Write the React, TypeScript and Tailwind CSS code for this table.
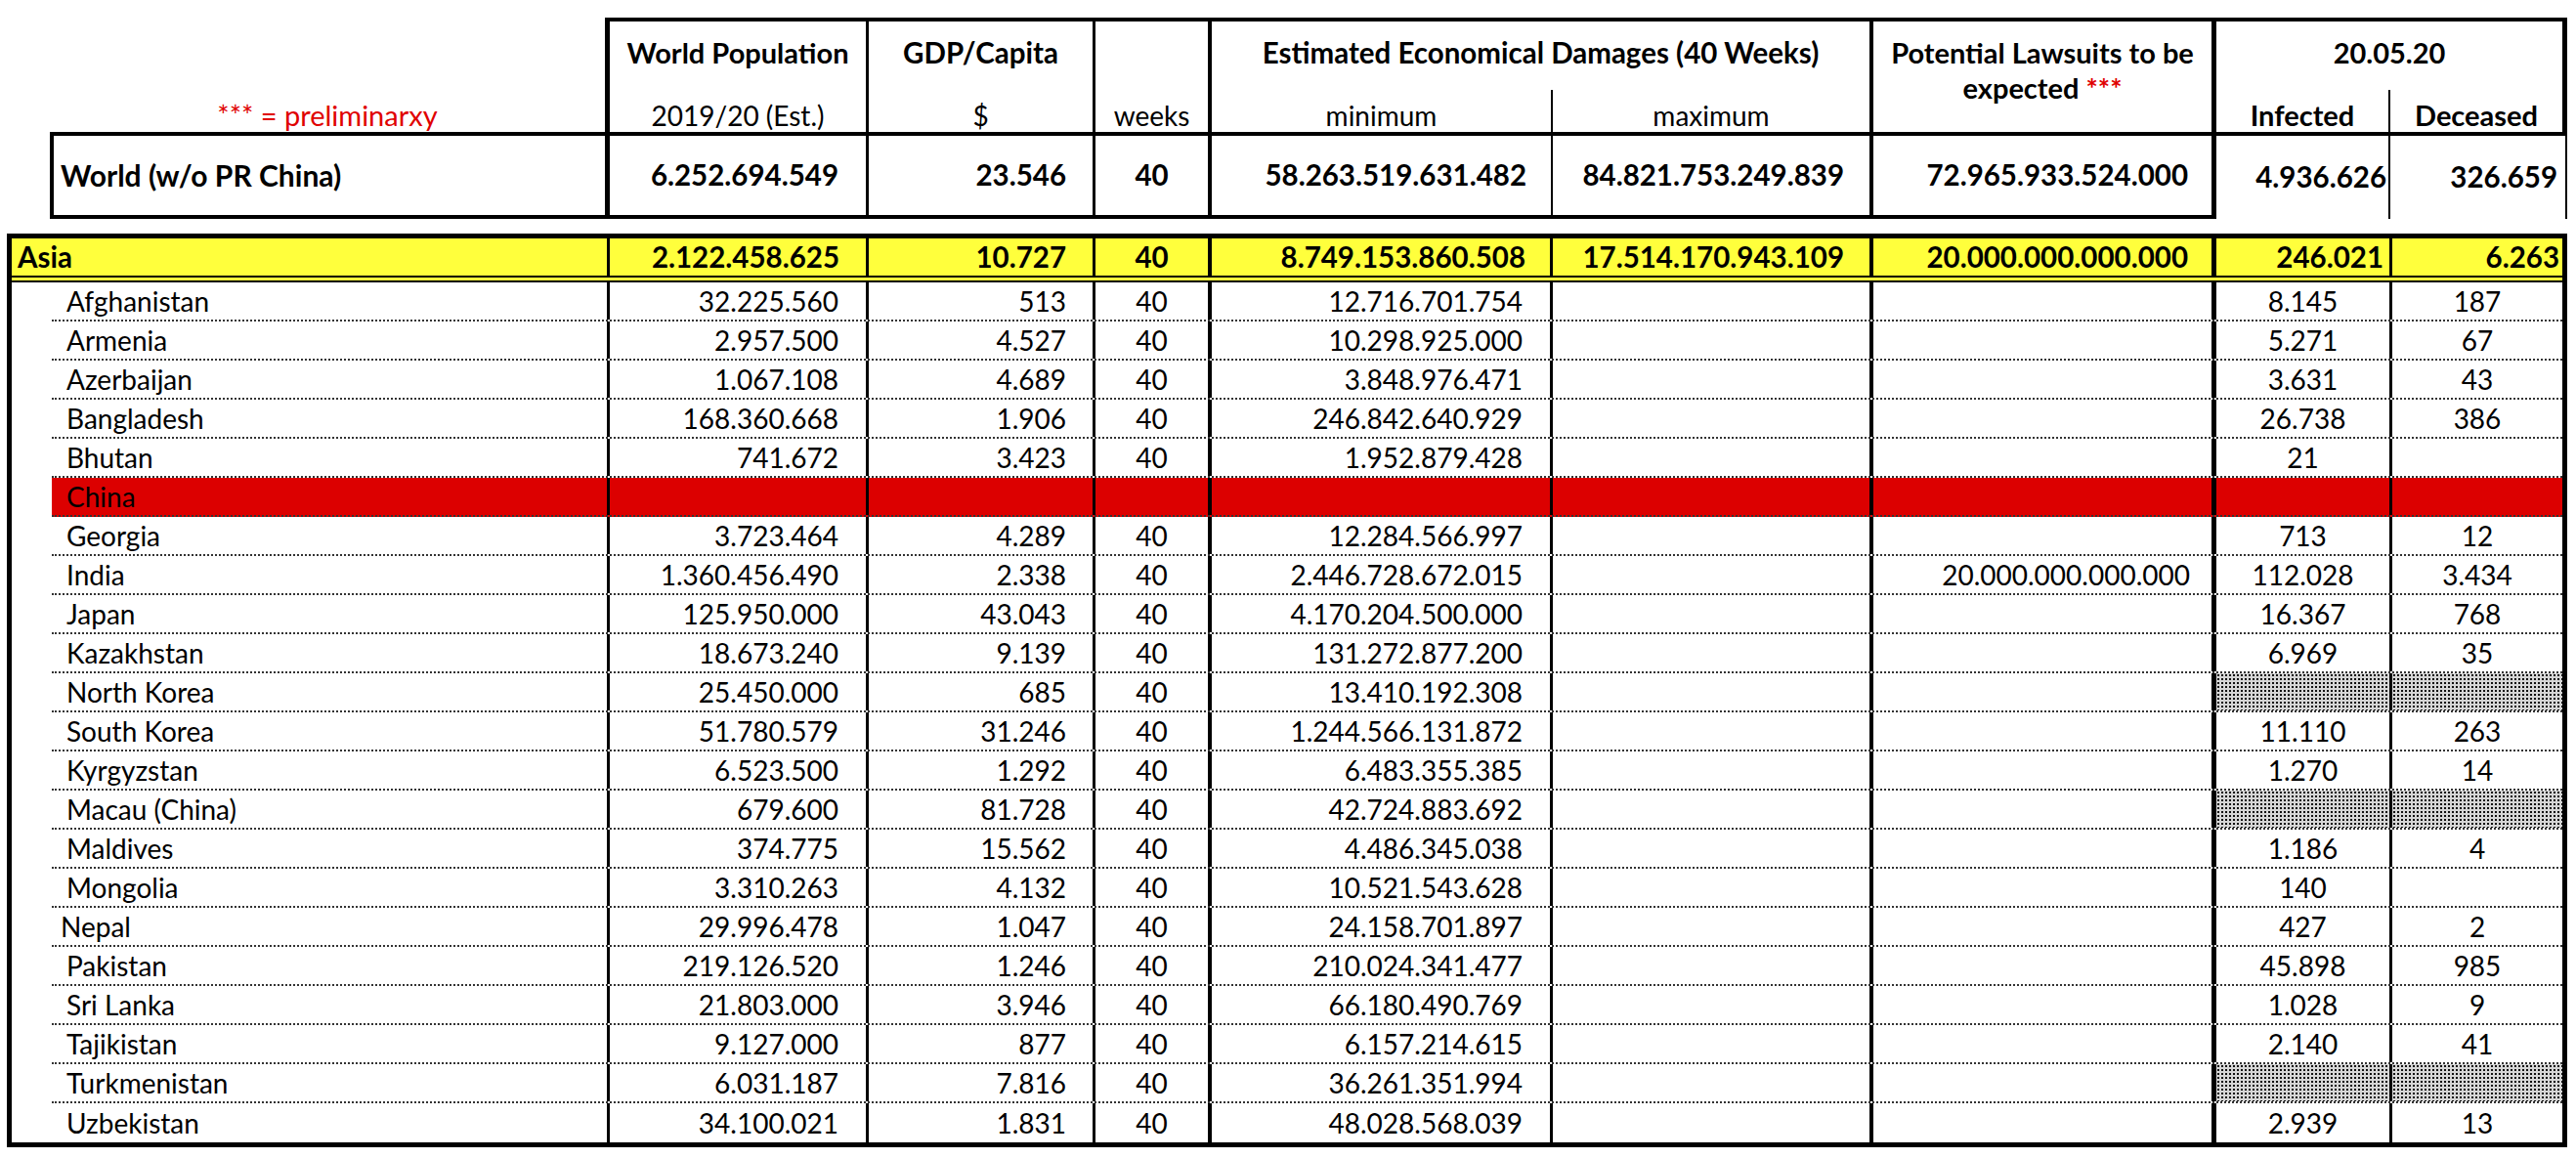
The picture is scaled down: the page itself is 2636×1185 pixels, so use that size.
const COLS = [
  "w-[265px] border-r-[3px]",
  "w-[232px] border-r-[3px]",
  "w-[119px] border-r-4",
  "w-[349px] border-r-[3px]",
  "w-[328px] border-r-4",
  "w-[351px] border-r-[5px]",
  "w-[180px] border-r-[3px]",
  "flex-1",
];

const ROW_ALIGN = [
  "justify-end pr-[28px]",
  "justify-end pr-[27px]",
  "justify-center",
  "justify-end pr-[28px]",
  "justify-end pr-[26px]",
  "justify-end pr-[22px]",
  "justify-center",
  "justify-center",
];

const ASIA_ALIGN = [
  "justify-end pr-[27px]",
  "justify-end pr-[27px]",
  "justify-center",
  "justify-end pr-[25px]",
  "justify-end pr-[26px]",
  "justify-end pr-[24px]",
  "justify-end pr-[6px]",
  "justify-end pr-[3px]",
];

// excel-style "gray 25%" fill
const STIPPLE =
  "bg-[#d6d6d6] bg-[radial-gradient(circle,#111_1px,transparent_1.5px)] bg-size-[4px_4px]";

type Country = {
  name: string;
  v: string[];
  red?: boolean;
  dots?: boolean;
  indent?: string;
};

const asia = [
  "2.122.458.625",
  "10.727",
  "40",
  "8.749.153.860.508",
  "17.514.170.943.109",
  "20.000.000.000.000",
  "246.021",
  "6.263",
];

const countries: Country[] = [
  { name: "Afghanistan", v: ["32.225.560", "513", "40", "12.716.701.754", "", "", "8.145", "187"] },
  { name: "Armenia", v: ["2.957.500", "4.527", "40", "10.298.925.000", "", "", "5.271", "67"] },
  { name: "Azerbaijan", v: ["1.067.108", "4.689", "40", "3.848.976.471", "", "", "3.631", "43"] },
  { name: "Bangladesh", v: ["168.360.668", "1.906", "40", "246.842.640.929", "", "", "26.738", "386"] },
  { name: "Bhutan", v: ["741.672", "3.423", "40", "1.952.879.428", "", "", "21", ""] },
  { name: "China", v: ["", "", "", "", "", "", "", ""], red: true },
  { name: "Georgia", v: ["3.723.464", "4.289", "40", "12.284.566.997", "", "", "713", "12"] },
  { name: "India", v: ["1.360.456.490", "2.338", "40", "2.446.728.672.015", "", "20.000.000.000.000", "112.028", "3.434"] },
  { name: "Japan", v: ["125.950.000", "43.043", "40", "4.170.204.500.000", "", "", "16.367", "768"] },
  { name: "Kazakhstan", v: ["18.673.240", "9.139", "40", "131.272.877.200", "", "", "6.969", "35"] },
  { name: "North Korea", v: ["25.450.000", "685", "40", "13.410.192.308", "", "", "", ""], dots: true },
  { name: "South Korea", v: ["51.780.579", "31.246", "40", "1.244.566.131.872", "", "", "11.110", "263"] },
  { name: "Kyrgyzstan", v: ["6.523.500", "1.292", "40", "6.483.355.385", "", "", "1.270", "14"] },
  { name: "Macau (China)", v: ["679.600", "81.728", "40", "42.724.883.692", "", "", "", ""], dots: true },
  { name: "Maldives", v: ["374.775", "15.562", "40", "4.486.345.038", "", "", "1.186", "4"] },
  { name: "Mongolia", v: ["3.310.263", "4.132", "40", "10.521.543.628", "", "", "140", ""] },
  { name: "Nepal", v: ["29.996.478", "1.047", "40", "24.158.701.897", "", "", "427", "2"], indent: "pl-[9px]" },
  { name: "Pakistan", v: ["219.126.520", "1.246", "40", "210.024.341.477", "", "", "45.898", "985"] },
  { name: "Sri Lanka", v: ["21.803.000", "3.946", "40", "66.180.490.769", "", "", "1.028", "9"] },
  { name: "Tajikistan", v: ["9.127.000", "877", "40", "6.157.214.615", "", "", "2.140", "41"] },
  { name: "Turkmenistan", v: ["6.031.187", "7.816", "40", "36.261.351.994", "", "", "", ""], dots: true },
  { name: "Uzbekistan", v: ["34.100.021", "1.831", "40", "48.028.568.039", "", "", "2.939", "13"] },
];

function Header() {
  return (
    <div className="flex pt-[18px] pl-[51px]">
      <div className="flex w-[568px] shrink-0 items-end justify-center">
        <span className="text-[29px] leading-[34px] text-[#e00000]">*** = preliminarxy</span>
      </div>
      <div className="flex h-[117px] w-[2008px] shrink-0 border-t-4 border-r-[5px] border-l-[5px] border-black text-[28px] leading-[34px]">
        <div className="flex w-[265px] shrink-0 flex-col items-center justify-between border-r-[3px] border-black pt-[15px]">
          <span className="text-[29px] font-bold">World Population</span>
          <span>2019/20 (Est.)</span>
        </div>
        <div className="flex w-[232px] shrink-0 flex-col items-center justify-between border-r-[3px] border-black pt-[15px]">
          <span className="text-[29.5px] font-bold">GDP/Capita</span>
          <span>$</span>
        </div>
        <div className="flex w-[119px] shrink-0 flex-col items-center justify-end border-r-4 border-black">
          <span>weeks</span>
        </div>
        <div className="flex w-[677px] shrink-0 flex-col justify-between border-r-4 border-black pt-[15px]">
          <span className="text-center text-[29.5px] font-bold">Estimated Economical Damages (40 Weeks)</span>
          <div className="flex h-[43px]">
            <div className="flex w-[349px] shrink-0 items-end justify-center border-r-2 border-black">minimum</div>
            <div className="flex flex-1 items-end justify-center">maximum</div>
          </div>
        </div>
        <div className="w-[351px] shrink-0 border-r-[5px] border-black pt-[14px] text-center text-[29px] leading-[36px] font-bold">
          <div>Potential Lawsuits to be</div>
          <div>
            expected <span className="text-[#e00000]">***</span>
          </div>
        </div>
        <div className="flex flex-1 flex-col justify-between pt-[15px] text-[29px] font-bold">
          <span className="text-center">20.05.20</span>
          <div className="flex h-[43px]">
            <div className="flex w-[178px] shrink-0 items-end justify-center border-r-2 border-black">Infected</div>
            <div className="flex flex-1 items-end justify-center">Deceased</div>
          </div>
        </div>
      </div>
    </div>
  );
}

function WorldRow() {
  const cell = "flex shrink-0 items-center border-black";
  return (
    <div className="ml-[51px] flex h-[89px] w-[2576px] border-t-4 border-l-4 border-black text-[29.5px] font-bold">
      <div className={`${cell} w-[569px] border-r-[5px] border-b-4 pl-[7px] text-[30px]`}>World (w/o PR China)</div>
      <div className={`${cell} w-[265px] justify-end border-r-[3px] border-b-4 pr-[28px]`}>6.252.694.549</div>
      <div className={`${cell} w-[232px] justify-end border-r-[3px] border-b-4 pr-[27px]`}>23.546</div>
      <div className={`${cell} w-[119px] justify-center border-r-4 border-b-4`}>40</div>
      <div className={`${cell} w-[349px] justify-end border-r-2 border-b-4 pr-[25px]`}>58.263.519.631.482</div>
      <div className={`${cell} w-[328px] justify-end border-r-4 border-b-4 pr-[26px]`}>84.821.753.249.839</div>
      <div className={`${cell} w-[351px] justify-end border-r-[5px] border-b-4 pr-[24px]`}>72.965.933.524.000</div>
      <div className={`${cell} w-[178px] justify-end border-r-2 pr-[2px]`}>4.936.626</div>
      <div className={`${cell} flex-1 justify-end border-r-2 pr-[8px]`}>326.659</div>
    </div>
  );
}

function AsiaTable() {
  return (
    <div className="mt-[15px] ml-[7px] w-[2620px] border-[5px] border-black text-[28px]">
      <div className="flex h-[45px] border-b-[7px] border-double border-black bg-[#ffff3c] text-[29.5px] font-bold">
        <div className="flex w-[612px] shrink-0 items-center border-r-[3px] border-solid border-black pl-[6px]">Asia</div>
        {asia.map((val, i) => (
          <div key={i} className={`flex shrink-0 items-center border-solid border-black ${COLS[i]} ${ASIA_ALIGN[i]}`}>
            {val}
          </div>
        ))}
      </div>
      {countries.map((c, r) => (
        <div key={c.name} className="flex h-[40px]">
          <div className="w-[41px] shrink-0" />
          <div
            className={`flex flex-1 ${r < countries.length - 1 ? "border-b-2 border-dotted border-[#333]" : ""} ${c.red ? "bg-[#dc0000]" : ""}`}
          >
            <div className={`flex w-[571px] shrink-0 items-center border-r-[3px] border-solid border-black ${c.indent ?? "pl-[15px]"}`}>
              {c.name}
            </div>
            {c.v.map((val, i) => (
              <div
                key={i}
                className={`flex shrink-0 items-center border-solid border-black ${COLS[i]} ${ROW_ALIGN[i]} ${c.dots && i >= 6 ? STIPPLE : ""}`}
              >
                {val}
              </div>
            ))}
          </div>
        </div>
      ))}
    </div>
  );
}

export default function App() {
  return (
    <div className="h-[1185px] w-[2636px] bg-white font-['Lato',sans-serif] text-black">
      <Header />
      <WorldRow />
      <AsiaTable />
    </div>
  );
}
